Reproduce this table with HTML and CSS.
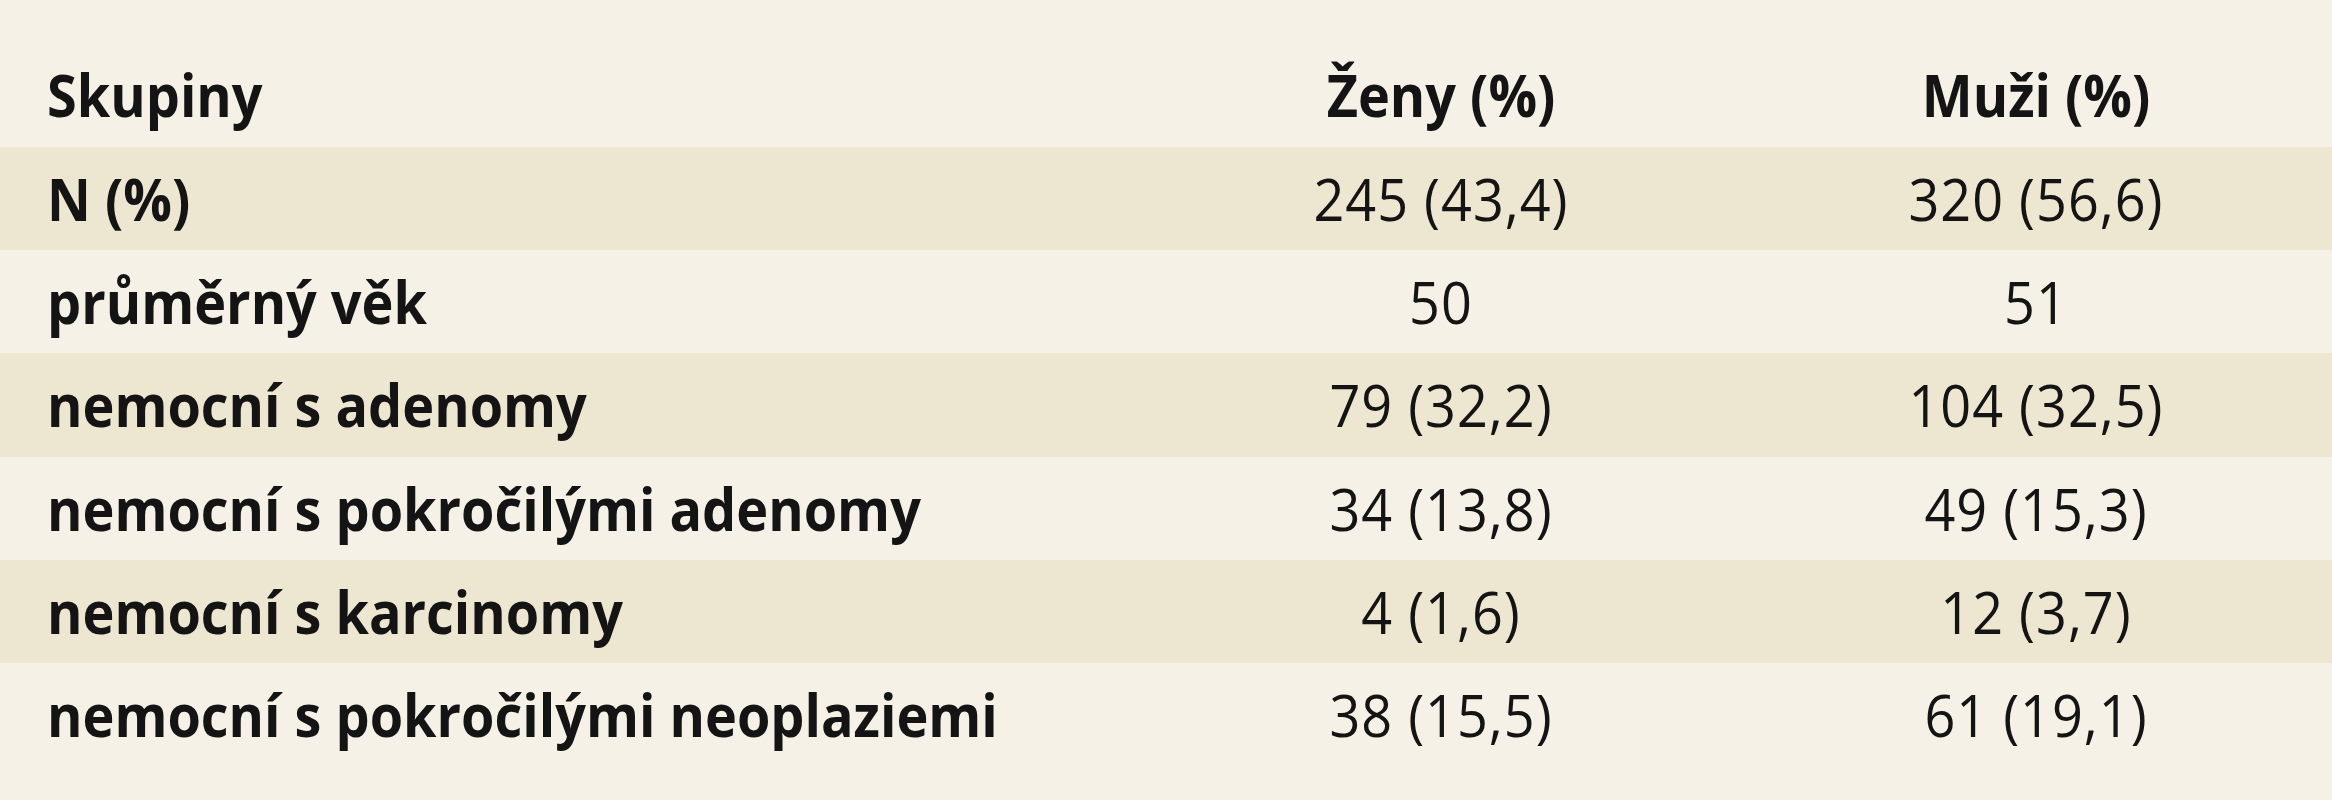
FILE: index.html
```html
<!DOCTYPE html>
<html lang="cs">
<head>
<meta charset="utf-8">
<title>Skupiny</title>
<link rel="stylesheet" href="styles.css">
</head>
<body>
<div class="table">
  <div class="row head">
    <div class="cell label"><span class="t">Skupiny</span></div>
    <div class="cell num"><span class="t b">Ženy (%)</span></div>
    <div class="cell num"><span class="t b">Muži (%)</span></div>
  </div>
  <div class="row shaded">
    <div class="cell label"><span class="t">N (%)</span></div>
    <div class="cell num"><span class="t">245 (43,4)</span></div>
    <div class="cell num"><span class="t">320 (56,6)</span></div>
  </div>
  <div class="row">
    <div class="cell label"><span class="t">průměrný věk</span></div>
    <div class="cell num"><span class="t">50</span></div>
    <div class="cell num"><span class="t">51</span></div>
  </div>
  <div class="row shaded">
    <div class="cell label"><span class="t">nemocní s adenomy</span></div>
    <div class="cell num"><span class="t">79 (32,2)</span></div>
    <div class="cell num"><span class="t">104 (32,5)</span></div>
  </div>
  <div class="row">
    <div class="cell label"><span class="t">nemocní s pokročilými adenomy</span></div>
    <div class="cell num"><span class="t">34 (13,8)</span></div>
    <div class="cell num"><span class="t">49 (15,3)</span></div>
  </div>
  <div class="row shaded">
    <div class="cell label"><span class="t">nemocní s karcinomy</span></div>
    <div class="cell num"><span class="t">4 (1,6)</span></div>
    <div class="cell num"><span class="t">12 (3,7)</span></div>
  </div>
  <div class="row">
    <div class="cell label"><span class="t">nemocní s pokročilými neoplaziemi</span></div>
    <div class="cell num"><span class="t">38 (15,5)</span></div>
    <div class="cell num"><span class="t">61 (19,1)</span></div>
  </div>
</div>
</body>
</html>
```
FILE: styles.css
```css
html, body {
  margin: 0;
  padding: 0;
  background: #f5f1e6;
}
.table {
  width: 2332px;
  height: 800px;
  color: #141414;
  font-family: "Open Sans", "DejaVu Sans", sans-serif;
}
.row {
  display: grid;
  grid-template-columns: 1142px 598px 592px;
  height: 103.2px;
  box-sizing: border-box;
  padding-top: 26px;
}
.head {
  height: 147px;
  padding-top: 69px;
}
.shaded {
  background: #ede6d1;
}
.cell {
  font-size: 54px;
  line-height: 54px;
  height: 54px;
  white-space: nowrap;
}
.label {
  padding-left: 47px;
  font-weight: 700;
}
.num {
  text-align: center;
  font-weight: 400;
  letter-spacing: 1px;
}
.t {
  display: inline-block;
  transform-origin: 50% 0.888em;
  transform: scaleY(1.1);
}
.b {
  font-weight: 700;
  letter-spacing: 0;
}
```
